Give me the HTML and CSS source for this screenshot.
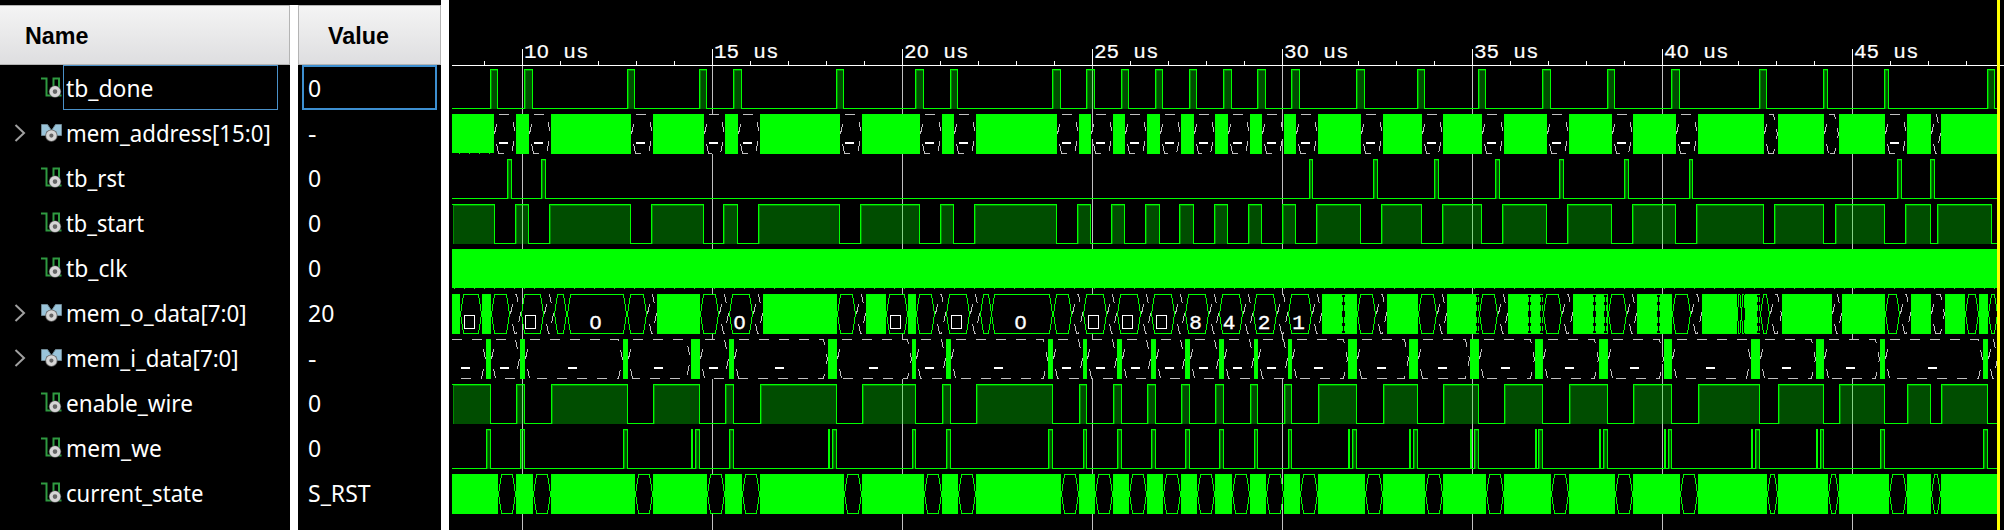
FILE: index.html
```
<!DOCTYPE html>
<html lang="en">
<head>
<meta charset="utf-8">
<title>Waveform</title>
<link rel="stylesheet" href="styles.css">
</head>
<body>
<svg class="defs" aria-hidden="true">
  <symbol id="scalar" viewBox="0 0 22 22">
    <path d="M0 1.5H5.5V18.5H12.5V1.5H18V18.5H20.5" fill="none" stroke="#2f9a41" stroke-width="2"/>
    <circle cx="14" cy="14.6" r="6.2" fill="#555"/>
    <circle cx="14" cy="14.6" r="3.9" fill="#666" stroke="#d6d6d6" stroke-width="3.2"/>
  </symbol>
  <symbol id="bus" viewBox="0 0 22 22">
    <path d="M.5 2.5H6.5L10.5 8.5L14.5 2.5H20.5V13.5H.5Z" fill="#9ac4da" stroke="#6f8894" stroke-width="1"/>
    <circle cx="10.4" cy="13.6" r="6.2" fill="#666"/>
    <circle cx="10.4" cy="13.6" r="3.7" fill="#666" stroke="#d6d6d6" stroke-width="3.2"/>
  </symbol>
</svg>
<div class="viewer">
  <div class="table">
    <div class="names">
      <div class="head">Name</div>
      <div id="names"></div>
    </div>
    <div class="values">
      <div class="head">Value</div>
      <div id="values"></div>
    </div>
  </div>
  <svg class="wave" id="wave" width="1555" height="530" viewBox="449 0 1555 530"></svg>
</div>
<script src="wave.js"></script>
</body>
</html>
```
FILE: styles.css
```
body {
  margin: 0;
  background: #000;
  overflow: hidden;
}
.defs {
  position: absolute;
  width: 0;
  height: 0;
}
.viewer {
  display: flex;
  gap: 8px;
  width: 2004px;
  height: 530px;
  background: linear-gradient(90deg, #000 441px, #fff 441px, #fff 449px, #000 449px);
}
.table {
  display: flex;
  flex: none;
  gap: 8px;
  width: 441px;
  height: 525px;
  border-top: 5px solid #000;
  background: #fff;
}
.wave {
  flex: none;
}
.names,
.values {
  background: #000;
  color: #fff;
}
.names {
  width: 290px;
}
.values {
  width: 143px;
}
.head {
  height: 60px;
  box-sizing: border-box;
  border: 1px solid #b4b4b4;
  background: linear-gradient(#f4f4f4, #dedee0);
  color: #000;
  font: bold 23.3px/60px "Liberation Sans", Arial, sans-serif;
}
.names .head {
  padding-left: 25px;
  border-left: 0;
}
.values .head {
  padding-left: 29px;
}
.row {
  display: flex;
  align-items: center;
  height: 45px;
  font: 23px/45px "Noto Sans", "Open Sans", sans-serif;
  white-space: nowrap;
}
.names .row {
  padding-left: 14px;
}
.arrow {
  width: 13px;
  height: 20px;
  margin-right: 14px;
}
.icon {
  width: 22px;
  height: 22px;
}
.label {
  box-sizing: border-box;
  width: 215px;
  height: 45px;
  padding-left: 2px;
  border: 1px solid transparent;
  line-height: 45px;
}
.fit {
  display: inline-block;
  transform-origin: 0 50%;
}
.label.selected {
  border-color: #4a90c8;
}
.value {
  box-sizing: border-box;
  width: 135px;
  height: 45px;
  margin-left: 4px;
  padding-left: 4px;
  border: 2px solid transparent;
  line-height: 43px;
}
.value.selected {
  border-color: #3d8fd0;
}
.crisp {
  shape-rendering: crispEdges;
}
.axis-text {
  font: 21px "Liberation Mono", monospace;
  fill: #fff;
  stroke: #fff;
  stroke-width: .2px;
}
.bus-text {
  font: 21px "Liberation Mono", monospace;
  fill: #fff;
  stroke: #fff;
  stroke-width: .4px;
  text-anchor: middle;
}
```
FILE: wave.js
```
const G = '#00ff00', GRAY = '#c0c0c0', END = 1997;

// name, value, bus flag, rendered text widths
const rows = [
  ['tb_done', '0', 0, 86], ['mem_address[15:0]', '-', 1, 203], ['tb_rst', '0', 0, 57],
  ['tb_start', '0', 0, 77], ['tb_clk', '0', 0, 60], ['mem_o_data[7:0]', '20', 1, 179],
  ['mem_i_data[7:0]', '-', 1, 171], ['enable_wire', '0', 0, 125], ['mem_we', '0', 0, 94],
  ['current_state', 'S_RST', 0, 136]
];
const valueWidth = { '0': 13, '-': 8, '20': 26, 'S_RST': 63 };

document.getElementById('names').innerHTML = rows.map(([n, , bus], i) =>
  `<div class="row"><svg class="arrow" viewBox="0 0 13 20">${bus ? '<path d="M1.5 2L10 10L1.5 18" fill="none" stroke="#a0a0a0" stroke-width="2"/>' : ''}</svg>` +
  `<svg class="icon"><use href="#${bus ? 'bus' : 'scalar'}"/></svg>` +
  `<div class="label${i ? '' : ' selected'}"><span class="fit">${n}</span></div></div>`).join('');
document.getElementById('values').innerHTML = rows.map(([, v], i) =>
  `<div class="row"><div class="value${i ? '' : ' selected'}"><span class="fit">${v}</span></div></div>`).join('');

// condense each label to the narrower metrics of the table font
const fit = (el, w) => { el.style.transform = `scaleX(${w / el.offsetWidth})`; };
document.querySelectorAll('.label .fit').forEach((el, i) => fit(el, rows[i][3] + 1.5));
document.querySelectorAll('.value .fit').forEach((el, i) => fit(el, valueWidth[rows[i][1]]));

const rect = (x, y, w, h, f) => `<rect x="${x}" y="${y}" width="${w}" height="${h}" fill="${f}"/>`;
let back = '', out = '', text = '';

// open the counter of a zero centred on x, so that it has no inner dot
const plainZero = (x, base) => `<ellipse cx="${x}" cy="${base - 6.9}" rx="2" ry="3.2" fill="#000"/>`;

// time axis
out += rect(452, 65, 1552, 1, '#fff');
for (let x = 484; x < 2000; x += 38) {
  if ((x - 522) % 190) out += rect(x, 61, 1, 4, '#fff');
}
for (let i = 0; i < 8; i++) {
  const x = 522 + i * 190;
  out += rect(x, 49, 1, 16, '#fff');
  back += rect(x, 66, 1, 464, GRAY);
  text += `<text class="axis-text" x="${x + 2}" y="58" word-spacing="1.5">${10 + i * 5} us</text>`;
  if (i % 2 === 0) text += plainZero(x + 2 + 18.9, 58);
}

// one-bit signal: list of [start, end) high intervals
function bit(top, highs) {
  const bottom = top + 39;
  let pos = 452;
  for (const [a, b] of highs) {
    if (a > pos) out += rect(pos, bottom, a - pos, 1, G);
    if (b - a < 3) { out += rect(a, top, b - a, 40, G); pos = b; continue; }
    const open = a === 452;
    out += `<rect x="${a + 1}" y="${top + 1}" width="${b - a - 2}" height="39" fill="${G}" fill-opacity=".3"/>`;
    out += `<path d="M${a + 1.5} ${bottom + 1}V${top + 1.5}H${b - 1}" fill="none" stroke="${G}" stroke-opacity=".35"/>`;
    out += rect(a, top, b - a, 1, G);
    if (!open) out += rect(a, top, 1, 40, G);
    out += rect(b - 1, top, 1, 40, G);
    pos = b;
  }
  if (pos < END) out += rect(pos, bottom, END - pos, 1, G);
}

function hex(top, a, b) {
  const d = Math.min(3, (b - a) / 2 - 1), m = top + 20, l = a + .5, r = b - .5, t = top + .5, u = top + 39.5;
  out += `<path d="M${l} ${m}L${l + d} ${t}H${r - d}L${r} ${m}L${r - d} ${u}H${l + d}Z" fill="#000" stroke="${G}"/>`;
}
function unknown(top, a, b, label) {
  const d = 4, m = top + 20, l = a + .5, r = b - .5, t = top + .5, u = top + 39.5;
  out += `<path d="M${l + d} ${u}L${l} ${m}L${l + d} ${t}H${r - d}L${r} ${m}L${r - d} ${u}Z" fill="#000" stroke="${GRAY}" stroke-dasharray="10 10"/>`;
  if (label) out += rect(Math.round((a + b) / 2 - 1.2 - 4.4), top + 28, 9, 2, '#fff');
}
const gaps = list => list.slice(1).map((g, i) => [list[i][1], g[0]]);

bit(69, [[490,498],[524,533],[627,635],[699,707],[733,742],[836,844],[915,924],[950,958],[1052,1061],
  [1086,1095],[1121,1129],[1155,1163],[1189,1197],[1223,1232],[1257,1266],[1291,1300],[1356,1365],
  [1417,1425],[1478,1486],[1542,1551],[1607,1615],[1671,1680],[1759,1767],[1823,1828],[1884,1889],[1987,1995]]);

const addr = [[452,494],[516,529],[551,631],[653,704],[725,738],[760,840],[862,920],[942,954],[976,1057],
  [1079,1091],[1113,1125],[1147,1160],[1181,1194],[1215,1228],[1250,1262],[1284,1296],[1318,1361],
  [1383,1422],[1443,1482],[1504,1547],[1569,1612],[1633,1676],[1698,1764],[1778,1824],[1839,1885],
  [1907,1931],[1941,1997]];
addr.forEach(([a, b], i) => { out += rect(a, 114, b - a, i ? 40 : 39, G); });
for (let x = 459; x < 494; x += 10) out += rect(x, 153, 1, 1, G);
gaps(addr).forEach(([a, b]) => unknown(114, a, b, b - a > 16));

bit(159, [[507,512],[541,546],[1309,1313],[1373,1378],[1434,1439],[1495,1500],[1559,1564],[1624,1629],
  [1689,1693],[1897,1902],[1930,1935]]);

bit(204, [[452,495],[515,529],[549,631],[651,704],[723,738],[758,840],[860,920],[940,954],[974,1057],
  [1077,1091],[1111,1125],[1145,1160],[1179,1194],[1214,1228],[1248,1262],[1282,1296],[1316,1361],
  [1381,1422],[1442,1482],[1502,1547],[1567,1612],[1632,1676],[1696,1764],[1774,1824],[1835,1885],
  [1905,1931],[1937,1992]]);

// clock is too dense to resolve at this zoom
out += rect(452, 249, END - 452, 39, G);
for (let x = 454; x < END; x += 10) out += rect(x, 288, 1, 1, G);

// mem_o_data: g = dense activity, h = value cell, x = unknown, n = sub-pixel transition
const mo = `g452-460 h460-482:B469.5 g482-491 h491-510 x510-521 h521-544:B530.5 x544-554 h554-567 h567-627:0@595.5
 h627-647 x647-657 g657-700 h700-719 x719-729 h729-753:0@739.5 x753-763 g763-837 h837-856 x856-866 g866-886
 h886-908:B895.5 g908-916 h916-935 x935-946 h946-970:B956.5 x970-980 h980-992 h991-1053:0@1020.5 h1053-1072
 x1072-1083 h1083-1107:B1093.5 x1107-1117 h1117-1141:B1127.5 x1141-1151 h1151-1175:B1161.5 x1175-1185
 h1185-1209:8@1195.5 x1209-1219 h1219-1243:4@1229 x1243-1253 h1253-1277:2@1264 x1277-1288 h1288-1312:1@1298.5
 x1312-1322 g1322-1357 n1343 h1357-1376 x1376-1387 g1387-1418 h1418-1437 x1437-1447 g1447-1479 n1477 h1479-1498
 x1498-1508 g1508-1543 n1529 n1541 h1543-1562 x1562-1573 g1573-1608 n1594 n1605 h1608-1627 x1627-1637
 g1637-1672 n1658 h1672-1691 x1691-1702 g1702-1737 h1737-1742 h1741-1746 g1745-1760 n1758 h1760-1770 x1770-1782
 g1782-1832 x1832-1842 g1842-1885 h1885-1900 x1900-1911 g1911-1931 x1931-1945 g1945-1965 h1965-1979 g1979-1988
 h1988-1998`;
for (const item of mo.split(/\s+/)) {
  const [, k, a, b, lab] = item.match(/^(\w)(\d+)(?:-(\d+))?(?::(.+))?$/);
  const s = +a, e = +b;
  if (k === 'g') out += rect(s, 294, e - s, 40, G);
  if (k === 'h') hex(294, s, e);
  if (k === 'x') unknown(294, s, e);
  if (k === 'n') {
    out += rect(s, 296, 1, 36, '#000');
    for (const [y, h] of [[295, 2], [302, 3], [311, 6], [323, 3], [331, 2]]) out += rect(s - 1, y, 3, h, '#000');
  }
  if (lab && lab[0] === 'B') {
    out += `<rect x="${+lab.slice(1) - 5}" y="315.5" width="10" height="13" fill="none" stroke="#fff"/>`;
  } else if (lab) {
    const [c, x] = lab.split('@');
    text += `<text class="bus-text" x="${x}" y="329">${c}</text>`;
    if (c === '0') text += plainZero(+x, 329);
  }
}

const mi = [[447,447],[486,491],[520,525],[623,628],[691,700],[729,734],[828,837],[912,916],[946,951],
  [1048,1053],[1083,1087],[1117,1122],[1151,1156],[1185,1190],[1219,1224],[1254,1258],[1288,1292],
  [1348,1357],[1409,1418],[1470,1479],[1535,1543],[1599,1608],[1664,1672],[1751,1760],[1816,1824],
  [1880,1885],[1983,1988],[1998,1998]];
gaps(mi).forEach(([a, b]) => unknown(339, a, b, b - a > 16));
mi.forEach(([a, b]) => { out += rect(a, 339, b - a, 40, G); });

bit(384, [[452,491],[516,525],[551,628],[653,700],[725,734],[760,837],[862,916],[942,951],[976,1053],
  [1079,1087],[1113,1122],[1147,1156],[1181,1190],[1215,1224],[1250,1258],[1284,1292],[1318,1357],
  [1383,1418],[1443,1479],[1504,1543],[1569,1608],[1633,1672],[1698,1760],[1778,1824],[1839,1885],
  [1907,1931],[1941,1988]]);

bit(429, [[486,491],[520,525],[623,628],[691,693],[695,700],[729,734],[828,830],[832,837],[912,916],
  [946,951],[1048,1053],[1083,1087],[1117,1122],[1151,1156],[1185,1190],[1219,1224],[1254,1258],
  [1288,1292],[1348,1350],[1352,1357],[1409,1411],[1413,1418],[1470,1472],[1474,1479],[1535,1537],
  [1538,1543],[1599,1601],[1603,1608],[1664,1666],[1668,1672],[1751,1753],[1755,1760],[1816,1818],
  [1820,1824],[1880,1885],[1983,1988]]);

const state = [[452,498],[516,533],[551,635],[653,707],[725,742],[760,844],[862,924],[942,958],[976,1061],
  [1079,1095],[1113,1129],[1147,1163],[1181,1197],[1215,1232],[1250,1266],[1284,1300],[1318,1365],
  [1383,1425],[1443,1486],[1504,1551],[1569,1615],[1633,1680],[1698,1767],[1778,1828],[1839,1889],
  [1907,1931],[1941,1997]];
state.forEach(([a, b]) => { out += rect(a, 474, b - a, 40, G); });
gaps(state).forEach(([a, b]) => hex(474, a, b));

// clip everything past the cursor, then draw the cursor itself
out += rect(END, 66, 7, 464, '#000') + rect(END, 0, 3, 530, '#ffff00');

document.getElementById('wave').innerHTML =
  `<g class="crisp">${rect(449, 0, 1555, 530, '#000')}${back}${out}${rect(449, 66, 3, 464, '#000')}</g>${text}`;
```
